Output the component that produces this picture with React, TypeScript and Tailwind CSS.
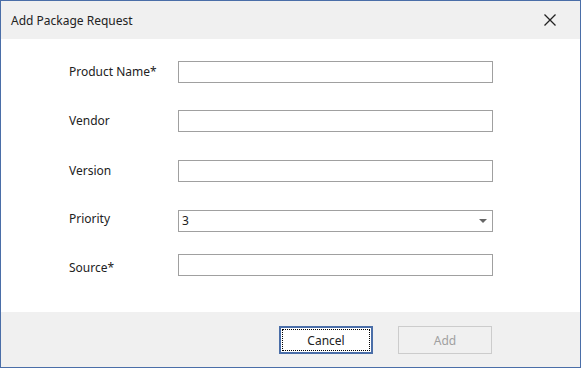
import { useState } from "react";

const font = { fontFamily: '"Noto Sans", "Liberation Sans", sans-serif' };

function Field({
  label,
  mt,
  labelCls = "",
  children,
}: {
  label: string;
  mt: string;
  labelCls?: string;
  children: React.ReactNode;
}) {
  return (
    <div className={`flex h-[22px] items-center ${mt}`}>
      <div className={`w-[109px] shrink-0 text-[12px] text-[#222] ${labelCls}`}>{label}</div>
      {children}
    </div>
  );
}

function TextBox() {
  return <input className="h-[22px] w-[315px] border border-[#a0a0a0] bg-white px-1 text-[12px] outline-none" />;
}

export default function App() {
  const [priority] = useState("3");

  return (
    <div style={font} className="flex h-[368px] w-[581px] flex-col border border-[#4a6ea8] bg-white">
      <div className="flex h-[38px] shrink-0 items-center justify-between bg-[#f0f0f0] pl-[10px] pr-[24px]">
        <span className="mt-[2px] text-[12px] text-[#222]">Add Package Request</span>
        <svg width="12" height="12" viewBox="0 0 12 12" className="text-[#222]">
          <path d="M0.5 0.5 L11.5 11.5 M11.5 0.5 L0.5 11.5" stroke="currentColor" strokeWidth="1.3" />
        </svg>
      </div>

      <div className="flex flex-1 flex-col pl-[68px] pt-[22px]">
        <Field label="Product Name*" mt="">
          <TextBox />
        </Field>
        <Field label="Vendor" mt="mt-[27px]">
          <TextBox />
        </Field>
        <Field label="Version" mt="mt-[28px]">
          <TextBox />
        </Field>
        <Field label="Priority" mt="mt-[28px]" labelCls="-mt-[5px]">
          <div className="flex h-[22px] w-[315px] items-center justify-between border border-[#a0a0a0] bg-white pl-[3px] pr-[5px] text-[12px] text-[#222]">
            <span>{priority}</span>
            <svg width="8" height="4" viewBox="0 0 8 4">
              <path d="M0 0 H8 L4 4 Z" fill="#666" />
            </svg>
          </div>
        </Field>
        <Field label="Source*" mt="mt-[22px]" labelCls="mt-[5px]">
          <TextBox />
        </Field>
      </div>

      <div className="flex h-[55px] shrink-0 items-start justify-end gap-[25px] bg-[#f0f0f0] pr-[88px] pt-[14px]">
        <button className="flex h-[28px] w-[94px] items-center justify-center border-2 border-[#4a6ea8] bg-white p-[1px]">
          <span className="flex h-full w-full items-center justify-center border border-dotted border-black pt-[2px] text-[12px] text-[#222]">
            Cancel
          </span>
        </button>
        <button disabled className="h-[28px] w-[94px] border border-[#cccccc] bg-[#f0f0f0] pt-[2px] text-[12px] text-[#a0a0a0]">
          Add
        </button>
      </div>
    </div>
  );
}
